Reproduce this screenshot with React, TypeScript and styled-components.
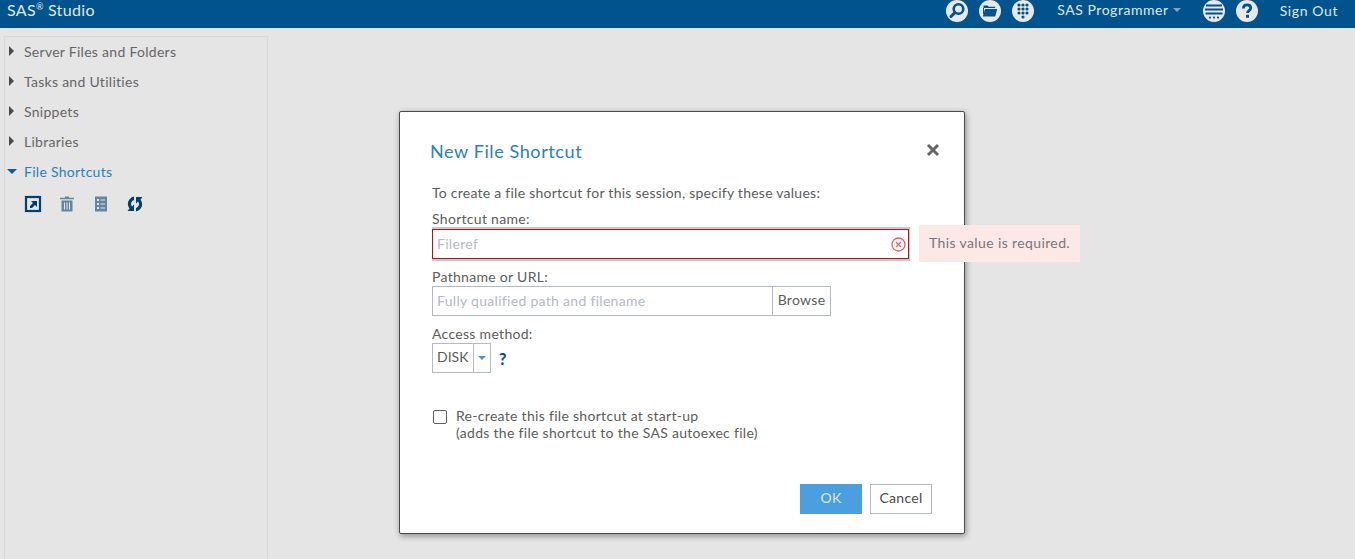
import React from 'react';
import styled, { createGlobalStyle } from 'styled-components';

const GlobalStyle = createGlobalStyle`
  html, body {
    margin: 0;
    height: 100%;
    overflow: hidden;
    background: #e5e5e5;
  }
  body {
    font-family: Lato, "Open Sans", sans-serif;
    font-size: 14px;
    color: #5c5c5c;
  }
  * {
    box-sizing: border-box;
  }
`;

const Page = styled.div`
  position: relative;
  width: 1355px;
  height: 559px;
  overflow: hidden;
`;

const Header = styled.header`
  height: 28px;
  background: #00538c;
  color: #dfe8ef;
  display: flex;
  align-items: flex-start;
  justify-content: space-between;
  padding: 0 17px 0 7px;
`;

const Brand = styled.div`
  font-size: 16px;
  line-height: 20px;
  letter-spacing: 0.35px;
  sup {
    font-size: 9px;
    line-height: 0;
    vertical-align: 6px;
    margin: 0 4px 0 0;
  }
`;

const HeaderTools = styled.div`
  display: flex;
  align-items: center;
  height: 21px;
`;

const RoundIcon = styled.svg<{ $gap?: number }>`
  width: 22px;
  height: 22px;
  margin-right: ${(p) => p.$gap ?? 11}px;
  flex: none;
`;

const UserMenu = styled.div`
  display: flex;
  align-items: center;
  font-size: 14px;
  letter-spacing: 0.55px;
  margin: -3px 22px 0 23px;
  gap: 4px;
  &::after {
    content: '';
    border-left: 4px solid transparent;
    border-right: 4px solid transparent;
    border-top: 4px solid #7fa5c1;
    margin-top: 2px;
  }
`;

const SignOut = styled.div`
  font-size: 14px;
  letter-spacing: 0.6px;
  margin: -1px 0 0 22px;
`;

const Sidebar = styled.aside`
  margin: 8px 0 0 4px;
  width: 264px;
  height: 530px;
  border: 1px solid #d9d9d9;
`;

const NavRow = styled.div<{ $open?: boolean }>`
  height: 30px;
  padding-bottom: 2px;
  display: flex;
  align-items: center;
  padding-left: ${(p) => (p.$open ? 2 : 4)}px;
  letter-spacing: 0.28px;
  color: ${(p) => (p.$open ? '#2a82b5' : '#666')};
  white-space: nowrap;
`;

const Caret = styled.span<{ $open?: boolean }>`
  width: 0;
  height: 0;
  flex: none;
  ${(p) =>
    p.$open
      ? `border-left: 5px solid transparent;
         border-right: 5px solid transparent;
         border-top: 5px solid #00609f;
         margin-right: 7px;`
      : `border-top: 5px solid transparent;
         border-bottom: 5px solid transparent;
         border-left: 5px solid #4a4a4a;
         margin-right: 10px;`}
`;

const ToolRow = styled.div`
  display: flex;
  align-items: center;
  gap: 16px;
  padding: 8px 0 0 19px;
`;

const ToolIcon = styled.svg`
  width: 18px;
  height: 18px;
  flex: none;
`;

const Dialog = styled.section`
  position: absolute;
  left: 399px;
  top: 111px;
  width: 566px;
  height: 423px;
  background: #fff;
  border: 1px solid #4a4a4a;
  border-radius: 2px;
  box-shadow: 1px 2px 6px rgba(0, 0, 0, 0.4);
  padding: 28px 32px 19px 32px;
  display: flex;
  flex-direction: column;
`;

const TitleRow = styled.div`
  display: flex;
  justify-content: space-between;
  align-items: center;
  height: 24px;
  margin: 0 -8px 0 -2px;
`;

const Title = styled.h2`
  margin: -3px 0 0;
  font-size: 18px;
  font-weight: 400;
  letter-spacing: 0.6px;
  color: #2a82b5;
`;

const CloseIcon = styled.svg`
  width: 14px;
  height: 14px;
  margin: -4px 0 0 0;
`;

const Intro = styled.p`
  margin: 19px 0 7px;
  line-height: 20px;
  letter-spacing: 0.25px;
`;

const FieldLabel = styled.label`
  display: block;
  line-height: 18px;
  letter-spacing: 0.3px;
`;

const RequiredField = styled.div`
  position: relative;
  width: 478px;
  height: 34px;
  margin: -1px 0 7px;
  border-top: 2px solid #add3e1;
  border-right: 1px solid #add3e1;
  border-bottom: 2px solid #add3e1;
`;

const ErrorInput = styled.div`
  height: 100%;
  border: 1px solid #e00000;
  font-size: 14px;
  line-height: 27px;
  padding-left: 4px;
  color: #b4b9c6;
  letter-spacing: 0.3px;
`;

const ErrorIcon = styled.svg`
  position: absolute;
  right: 3px;
  top: 8px;
  width: 15px;
  height: 15px;
`;

const Tooltip = styled.div`
  position: absolute;
  left: 487px;
  top: -4px;
  width: 161px;
  height: 37px;
  background: #fde8e8;
  color: #7a7577;
  line-height: 36px;
  padding-left: 10px;
  letter-spacing: 0.38px;
  white-space: nowrap;
`;

const PathRow = styled.div`
  display: flex;
  height: 30px;
  margin-bottom: 9px;
`;

const PathInput = styled.div`
  width: 341px;
  border: 1px solid #b4b9c6;
  line-height: 28px;
  padding-left: 4px;
  color: #b4b9c6;
  letter-spacing: 0.3px;
`;

const BrowseButton = styled.div`
  width: 58px;
  border: 1px solid #b4b9c6;
  border-left: 0;
  line-height: 26px;
  text-align: center;
  letter-spacing: 0.3px;
`;

const SelectRow = styled.div`
  display: flex;
  align-items: center;
  height: 30px;
`;

const Select = styled.div`
  display: flex;
  width: 59px;
  height: 30px;
  border: 1px solid #b4b9c6;
`;

const SelectValue = styled.div`
  width: 41px;
  border-right: 1px solid #b4b9c6;
  line-height: 26px;
  padding-left: 4px;
`;

const SelectArrow = styled.div`
  flex: 1;
  display: flex;
  align-items: center;
  justify-content: center;
  &::after {
    content: '';
    border-left: 4px solid transparent;
    border-right: 4px solid transparent;
    border-top: 4px solid #5b93bf;
  }
`;

const HelpMark = styled.span`
  margin-left: 8px;
  font-weight: 900;
  font-size: 16px;
  color: #00538c;
`;

const CheckRow = styled.div`
  display: flex;
  margin-top: 34px;
`;

const CheckBox = styled.span`
  width: 14px;
  height: 14px;
  border: 1px solid #5f5f5f;
  border-radius: 2px;
  margin: 3px 9px 0 1px;
  flex: none;
`;

const CheckText = styled.div`
  line-height: 17px;
  letter-spacing: 0.3px;
`;

const Footer = styled.div`
  margin-top: auto;
  display: flex;
  justify-content: flex-end;
  gap: 8px;
`;

const Button = styled.div<{ $primary?: boolean }>`
  width: 62px;
  height: 30px;
  line-height: 26px;
  text-align: center;
  letter-spacing: 0.3px;
  background: ${(p) => (p.$primary ? '#4b9fdf' : '#fff')};
  color: ${(p) => (p.$primary ? '#d8e9f6' : '#4b4b4b')};
  border: 1px solid ${(p) => (p.$primary ? '#4b9fdf' : '#b4b9c6')};
`;

const navItems = ['Server Files and Folders', 'Tasks and Utilities', 'Snippets', 'Libraries'];

const App: React.FC = () => {
  return (
    <Page>
      <GlobalStyle />
      <Header>
        <Brand>
          SAS<sup>®</sup>Studio
        </Brand>
        <HeaderTools>
          <RoundIcon viewBox="0 0 22 22">
            <circle cx="11" cy="11" r="11" fill="#e8e8e8" />
            <circle cx="12.5" cy="9" r="4.8" fill="none" stroke="#00538c" strokeWidth="2.6" />
            <path d="M9 12.5 L5 16.5" stroke="#00538c" strokeWidth="3" strokeLinecap="round" />
          </RoundIcon>
          <RoundIcon viewBox="0 0 22 22">
            <circle cx="11" cy="11" r="11" fill="#e8e8e8" />
            <path d="M4.5 8V5.500h4l1.200 1.300h6.500V8z" fill="#00538c" />
            <path d="M6 9h12.200l-2 7.500H3.800z" fill="#00538c" />
            <path d="M4.500 8v6" stroke="#00538c" strokeWidth="1" />
          </RoundIcon>
          <RoundIcon viewBox="0 0 22 22" $gap={0}>
            <circle cx="11" cy="11" r="11" fill="#e8e8e8" />
            <g fill="#00538c">
              <circle cx="7" cy="5" r="1.600" />
              <circle cx="11" cy="5" r="1.600" />
              <circle cx="15" cy="5" r="1.600" />
              <circle cx="7" cy="9" r="1.600" />
              <circle cx="11" cy="9" r="1.600" />
              <circle cx="15" cy="9" r="1.600" />
              <circle cx="7" cy="13" r="1.600" />
              <circle cx="11" cy="13" r="1.600" />
              <circle cx="15" cy="13" r="1.600" />
              <circle cx="11" cy="17" r="1.600" />
            </g>
          </RoundIcon>
          <UserMenu>SAS Programmer</UserMenu>
          <RoundIcon viewBox="0 0 22 22">
            <circle cx="11" cy="11" r="11" fill="#e8e8e8" />
            <path d="M3 5.500h16M2 9.500h18M2.500 13.500h17" stroke="#00538c" strokeWidth="2" />
            <g fill="#00538c">
              <circle cx="7" cy="17.600" r="1.100" />
              <circle cx="11" cy="17.600" r="1.100" />
              <circle cx="15" cy="17.600" r="1.100" />
            </g>
          </RoundIcon>
          <RoundIcon viewBox="0 0 22 22" $gap={0}>
            <circle cx="11" cy="11" r="11" fill="#e8e8e8" />
            <path
              d="M7.400 8.500c0-2.300 1.600-3.600 3.700-3.600s3.600 1.300 3.600 3c0 2.700-3.200 2.600-3.200 5"
              fill="none"
              stroke="#00538c"
              strokeWidth="2.800"
            />
            <rect x="10" y="14.800" width="3" height="3" fill="#00538c" />
          </RoundIcon>
          <SignOut>Sign Out</SignOut>
        </HeaderTools>
      </Header>

      <Sidebar>
        {navItems.map((item) => (
          <NavRow key={item}>
            <Caret />
            {item}
          </NavRow>
        ))}
        <NavRow $open>
          <Caret $open />
          File Shortcuts
        </NavRow>
        <ToolRow>
          <ToolIcon viewBox="0 0 18 18">
            <rect x="2" y="2" width="14" height="14" fill="none" stroke="#003f6e" strokeWidth="2.200" />
            <path d="M6 13 L6 11 L9 8 L7 6 L13 6 L13 12 L11 10 L8 13z" fill="#003f6e" />
          </ToolIcon>
          <ToolIcon viewBox="0 0 18 18">
            <path d="M7 1.500h4v1.200h5v1.600H2V2.700h5z" fill="#64869f" />
            <path
              d="M3.500 5.500h11V16.500h-11zM6 7.500v7h1v-7zM8.500 7.500v7h1v-7zM11 7.500v7h1v-7z"
              fill="#64869f"
              fillRule="evenodd"
            />
          </ToolIcon>
          <ToolIcon viewBox="0 0 18 18">
            <path
              d="M3 1.500h12v15H3zM5 4v2h2V4zM5 8v2h2V8zM5 12v2h2v-2zM8.500 4.500v1h4.500v-1zM8.500 8.500v1h4.500v-1zM8.500 12.500v1h4.500v-1z"
              fill="#64869f"
              fillRule="evenodd"
            />
          </ToolIcon>
          <ToolIcon viewBox="0 0 18 18">
            <path
              d="M8 1.500A7.500 7.500 0 0 0 3.500 13.500L1.500 16H8V9.500L6 11.500A4 4 0 0 1 8 5z"
              fill="#003f6e"
            />
            <path
              d="M10 16.500A7.500 7.500 0 0 0 14.500 4.500L16.500 2H10V8.500L12 6.500A4 4 0 0 1 10 13z"
              fill="#003f6e"
            />
          </ToolIcon>
        </ToolRow>
      </Sidebar>

      <Dialog>
        <TitleRow>
          <Title>New File Shortcut</Title>
          <CloseIcon viewBox="0 0 14 14">
            <path d="M2 2 L12 12 M12 2 L2 12" stroke="#666" strokeWidth="3" />
          </CloseIcon>
        </TitleRow>
        <Intro>To create a file shortcut for this session, specify these values:</Intro>
        <FieldLabel>Shortcut name:</FieldLabel>
        <RequiredField>
          <ErrorInput>Fileref</ErrorInput>
          <ErrorIcon viewBox="0 0 15 15">
            <circle cx="7.500" cy="7.500" r="6.500" fill="none" stroke="#ef5a63" strokeWidth="1.300" />
            <path d="M5 5 L10 10 M10 5 L5 10" stroke="#ef5a63" strokeWidth="1.200" />
          </ErrorIcon>
          <Tooltip>This value is required.</Tooltip>
        </RequiredField>
        <FieldLabel>Pathname or URL:</FieldLabel>
        <PathRow>
          <PathInput>Fully qualified path and filename</PathInput>
          <BrowseButton>Browse</BrowseButton>
        </PathRow>
        <FieldLabel>Access method:</FieldLabel>
        <SelectRow>
          <Select>
            <SelectValue>DISK</SelectValue>
            <SelectArrow />
          </Select>
          <HelpMark>?</HelpMark>
        </SelectRow>
        <CheckRow>
          <CheckBox />
          <CheckText>
            Re-create this file shortcut at start-up
            <br />
            (adds the file shortcut to the SAS autoexec file)
          </CheckText>
        </CheckRow>
        <Footer>
          <Button $primary>OK</Button>
          <Button>Cancel</Button>
        </Footer>
      </Dialog>
    </Page>
  );
};

export default App;
